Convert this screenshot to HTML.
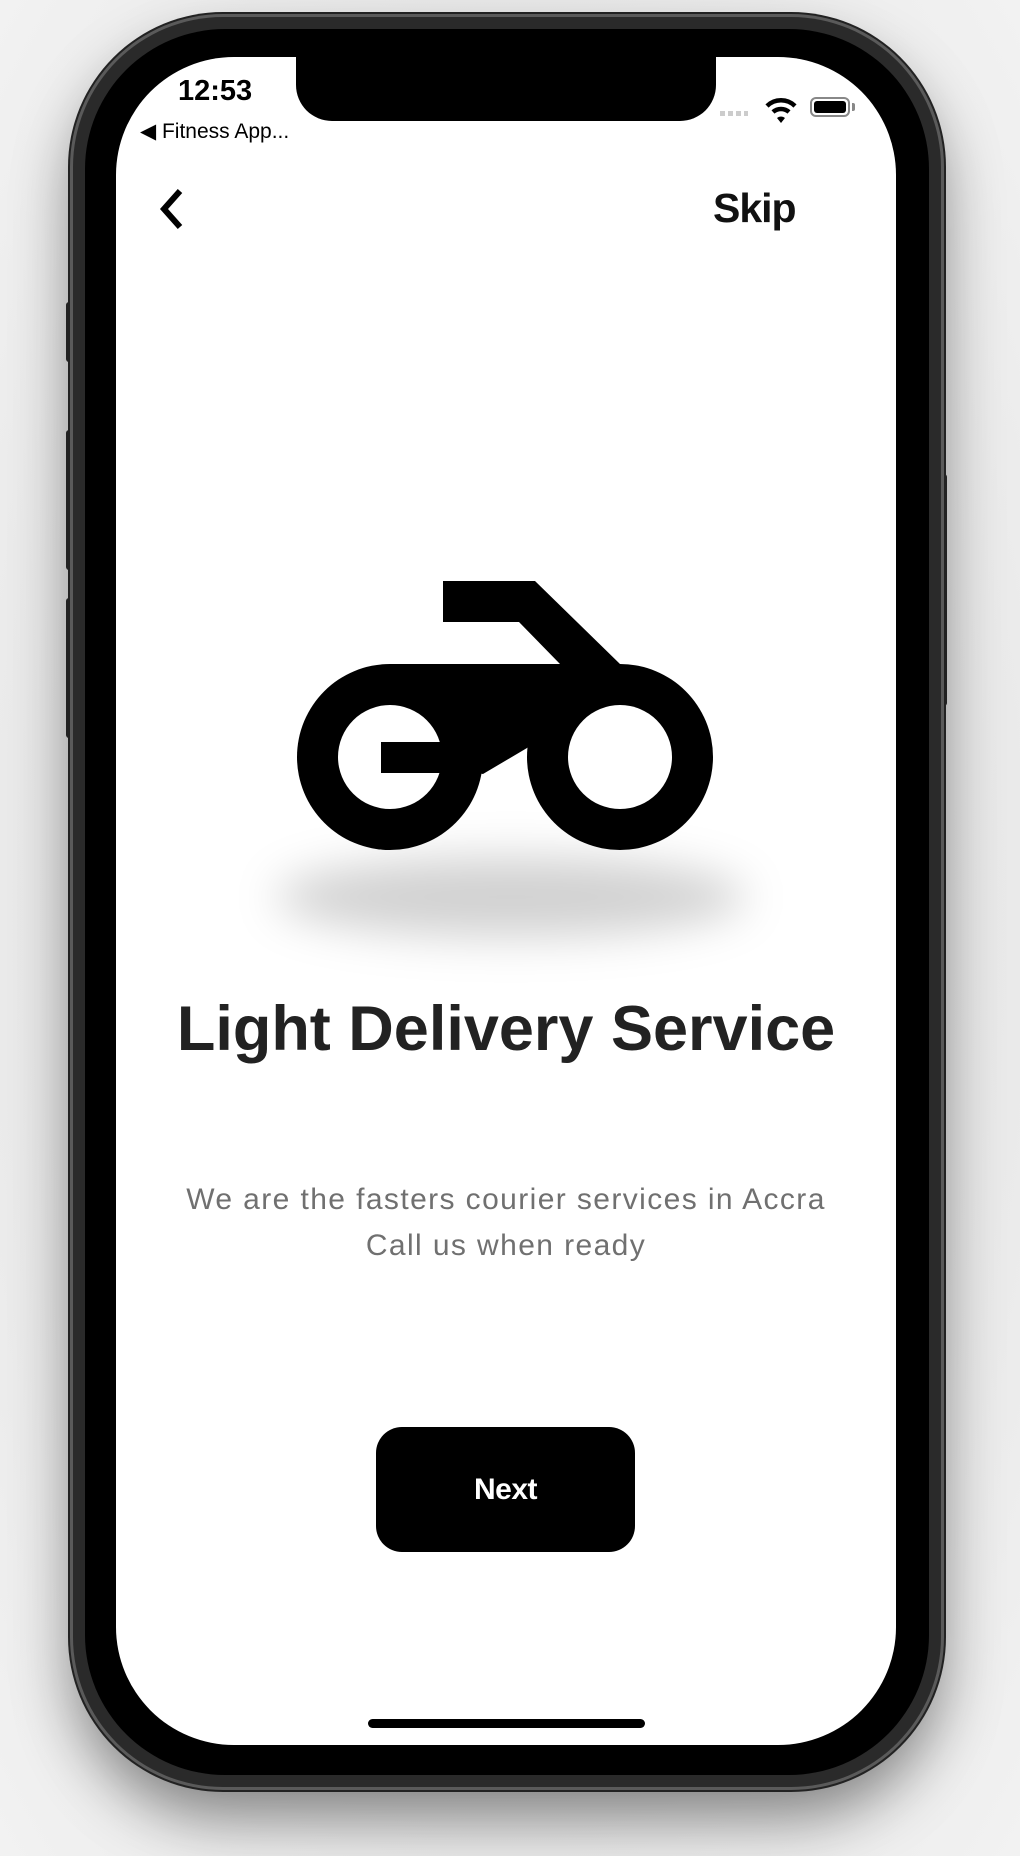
<!DOCTYPE html>
<html><head><meta charset="utf-8"><style>
html,body{margin:0;padding:0}
body{width:1020px;height:1856px;position:relative;overflow:hidden;background:radial-gradient(ellipse at 50% 50%,#d0d0d0 0%,#e6e6e6 55%,#f2f2f2 100%);font-family:"Liberation Sans",sans-serif}
.btn{position:absolute;background:#2a2a2a;border-radius:3px}
.phone{position:absolute;left:73px;top:17px;width:868px;height:1770px;border-radius:150px;background:#2a2a2a;box-shadow:0 0 0 3px #5a5a5a,0 0 0 5px #222,0 30px 60px rgba(0,0,0,.45)}
.bezel{position:absolute;left:85px;top:29px;width:844px;height:1746px;border-radius:140px;background:#000}
.screen{position:absolute;left:116px;top:57px;width:780px;height:1688px;border-radius:118px;background:#fff;overflow:hidden}
.notch{position:absolute;left:180px;top:-40px;width:420px;height:104px;background:#000;border-radius:0 0 36px 36px}
.abs{position:absolute}
</style></head><body>
<div class="btn" style="left:66px;top:302px;width:9px;height:60px"></div>
<div class="btn" style="left:66px;top:430px;width:9px;height:140px"></div>
<div class="btn" style="left:66px;top:598px;width:9px;height:140px"></div>
<div class="btn" style="left:938px;top:474px;width:9px;height:232px"></div>
<div class="phone"></div>
<div class="bezel"></div>
<div class="screen">
  <div class="notch"></div>
  <div class="abs" style="left:62px;top:18px;font-size:29px;font-weight:bold;color:#000">12:53</div>
  <div class="abs" style="left:24px;top:62px;font-size:21px;color:#000">◀ Fitness App...</div>
  <div class="abs" style="left:604px;top:54px;width:28px;height:5px;background:repeating-linear-gradient(90deg,#ccc 0 5px,transparent 5px 8px)"></div>
  <svg class="abs" style="left:648px;top:38px" width="34" height="30" viewBox="0 0 34 30"><path d="M3 11 A20 20 0 0 1 31 11" stroke="#000" stroke-width="4.5" fill="none"/><path d="M9 17 A12 12 0 0 1 25 17" stroke="#000" stroke-width="4.5" fill="none"/><path d="M13 23 L17 28 L21 23 A6 6 0 0 0 13 23Z" fill="#000"/></svg>
  <div class="abs" style="left:694px;top:40px;width:40px;height:20px;border:2px solid #888;border-radius:6px;box-sizing:border-box;padding:2px"><div style="width:100%;height:100%;background:#000;border-radius:3px"></div></div>
  <div class="abs" style="left:736px;top:46px;width:3px;height:8px;background:#888;border-radius:0 2px 2px 0"></div>
  <svg class="abs" style="left:40px;top:130px" width="30" height="44" viewBox="0 0 30 44"><path d="M24 4 L8 22 L24 40" stroke="#000" stroke-width="6" fill="none"/></svg>
  <div class="abs" style="left:597px;top:128px;font-size:41px;font-weight:bold;color:#111;letter-spacing:-1px">Skip</div>
  <div class="abs" style="left:160px;top:800px;width:470px;height:80px;border-radius:50%;background:rgba(0,0,0,.18);filter:blur(22px)"></div>
  <svg class="abs" style="left:0;top:0" width="780" height="1000" viewBox="116 57 780 1000">
    <polygon points="443,581 535,581 620,664 560,664 519,622 443,622" fill="#000"/>
    <polygon points="390,664 620,664 527,748 483,774 390,757" fill="#000"/>
    <circle cx="390" cy="757" r="93" fill="#000"/>
    <circle cx="620" cy="757" r="93" fill="#000"/>
    <circle cx="390" cy="757" r="52" fill="#fff"/>
    <circle cx="620" cy="757" r="52" fill="#fff"/>
    <rect x="381" y="742" width="62" height="31" fill="#000"/>
  </svg>
  <div class="abs" style="left:0;width:780px;top:936px;text-align:center;font-size:63px;font-weight:bold;color:#222">Light Delivery Service</div>
  <div class="abs" style="left:0;width:780px;top:1120px;text-align:center;font-size:30px;line-height:46px;color:#707070;letter-spacing:1.4px">We are the fasters courier services in Accra<br>Call us when ready</div>
  <div class="abs" style="left:260px;top:1370px;width:259px;height:125px;background:#000;border-radius:26px;color:#fff;font-weight:bold;font-size:30px;text-align:center;line-height:125px;letter-spacing:-0.5px">Next</div>
  <div class="abs" style="left:252px;top:1662px;width:277px;height:9px;background:#000;border-radius:5px"></div>
</div>
</body></html>
